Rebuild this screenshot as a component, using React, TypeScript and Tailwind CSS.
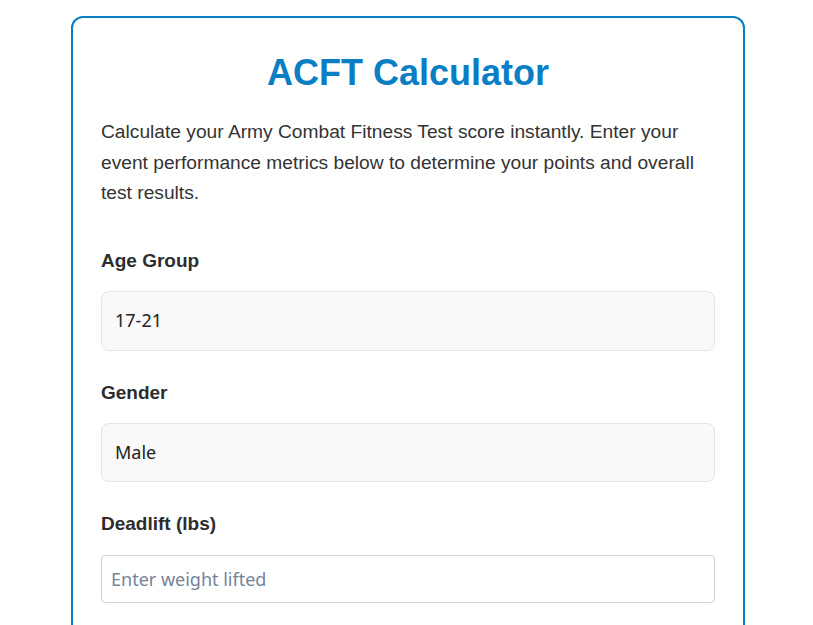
import { useState } from "react";

export default function App() {
  const [age, setAge] = useState("17-21");
  const [gender, setGender] = useState("Male");
  const [deadlift, setDeadlift] = useState("");

  return (
    <div className="min-h-screen bg-white font-['Liberation_Sans',Arial,sans-serif]">
      <div className="pt-4 pb-10">
        <div className="ml-[71px] w-[674px] rounded-xl border-2 border-[#0a7ec4] bg-white px-7 pt-[34px] pb-8">
          <h1 className="text-center text-4xl font-bold leading-[41px] text-[#0a7ec4]">
            ACFT Calculator
          </h1>

          <p className="mt-6 text-[19.2px] leading-[30.5px] text-[#333]">
            Calculate your Army Combat Fitness Test score instantly. Enter your
            event performance metrics below to determine your points and overall
            test results.
          </p>

          <div className="mt-[41px] flex flex-col gap-[31px]">
            {/* Age group */}
            <div>
              <label className="block text-[19px] font-bold leading-[21px] text-[#2d2d2d]">
                Age Group
              </label>
              <select
                value={age}
                onChange={(e) => setAge(e.target.value)}
                className="mt-5 h-[60px] w-full appearance-none rounded-lg border border-[#e3e3e8] bg-[#f9f9fa] px-[13px] font-['Noto_Sans',sans-serif] text-[18px] text-[#222] outline-none"
              >
                <option>17-21</option>
                <option>22-26</option>
                <option>27-31</option>
                <option>32-36</option>
                <option>37-41</option>
                <option>42-46</option>
                <option>47-51</option>
                <option>52-56</option>
                <option>57-61</option>
                <option>62+</option>
              </select>
            </div>

            {/* Gender */}
            <div>
              <label className="block text-[19px] font-bold leading-[21px] text-[#2d2d2d]">
                Gender
              </label>
              <select
                value={gender}
                onChange={(e) => setGender(e.target.value)}
                className="mt-5 h-[59px] w-full appearance-none rounded-lg border border-[#e3e3e8] bg-[#f9f9fa] px-[13px] font-['Noto_Sans',sans-serif] text-[18px] text-[#222] outline-none"
              >
                <option>Male</option>
                <option>Female</option>
              </select>
            </div>

            {/* Deadlift */}
            <div>
              <label className="block text-[19px] font-bold leading-[21px] text-[#2d2d2d]">
                Deadlift (lbs)
              </label>
              <input
                type="number"
                value={deadlift}
                onChange={(e) => setDeadlift(e.target.value)}
                placeholder="Enter weight lifted"
                className="mt-[21px] h-[48px] w-full rounded border border-[#c9d3e0] bg-white px-[9px] font-['Noto_Sans',sans-serif] text-[18px] text-[#222] outline-none placeholder:text-[#75839a]"
              />
            </div>

            {/* Standing power throw */}
            <div>
              <label className="block text-[19px] font-bold leading-[21px] text-[#2d2d2d]">
                Standing Power Throw (meters)
              </label>
              <input
                type="number"
                placeholder="Enter distance thrown"
                className="mt-[21px] h-[48px] w-full rounded border border-[#c9d3e0] bg-white px-[9px] font-['Noto_Sans',sans-serif] text-[18px] text-[#222] outline-none placeholder:text-[#75839a]"
              />
            </div>
          </div>
        </div>
      </div>
    </div>
  );
}
